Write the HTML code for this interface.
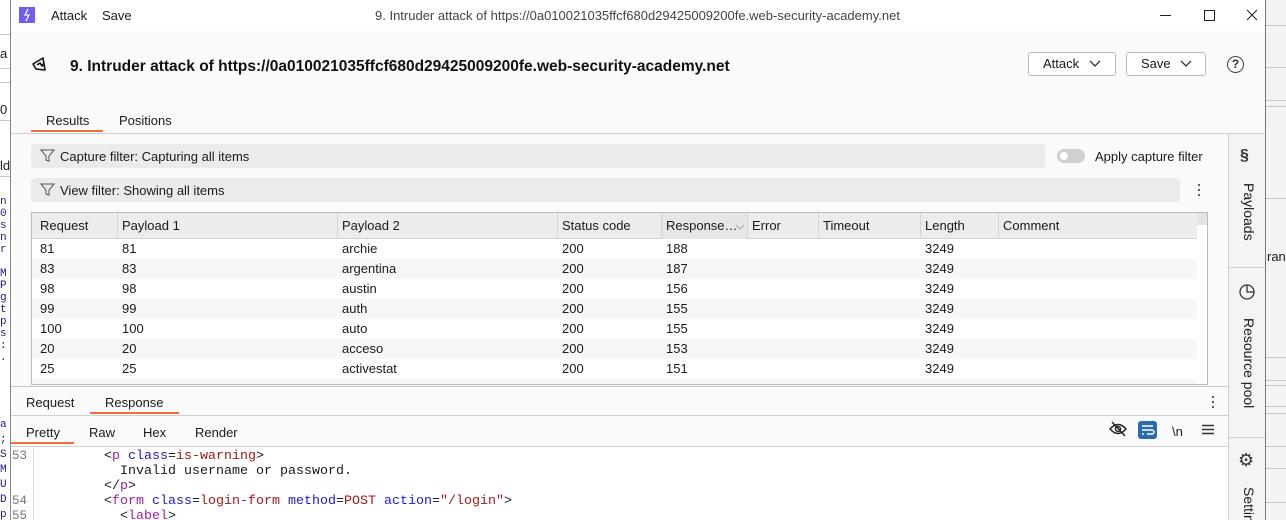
<!DOCTYPE html>
<html><head><meta charset="utf-8"><style>
*{margin:0;padding:0;box-sizing:border-box}
html,body{width:1286px;height:520px;overflow:hidden}
body{position:relative;font-family:"Liberation Sans",sans-serif;font-size:13px;color:#1a1a1a;background:#fafafa}
.a{position:absolute;white-space:nowrap}
.mono{font-family:"Liberation Mono",monospace;font-size:13.33px}
.bgL{left:0;top:0;width:11px;height:520px;background:#fff;overflow:hidden;border-right:1px solid #888}
.bgR{left:1265px;top:0;width:21px;height:520px;background:#f3f3f3;border-left:1px solid #777;overflow:hidden}
.hl{position:absolute;left:0;right:0;height:1px;background:#c8c8c8}
.row{position:absolute;left:21px;width:1165px;height:20px;line-height:20px}
.row span{position:absolute}
.hdr span{position:absolute;top:0;height:26px;line-height:26px;border-right:1px solid #d4d4d4;padding-left:4px}
.kw{color:#1a1ad0}.tg{color:#a020a0}.vl{color:#a01818}
</style></head><body>
<div class="a bgL">
<div class="a mono" style="left:0;top:196px;line-height:12px;font-size:11px;color:#1a1a80">n<br>0<br>s<br>n<br>r<br> <br>M<br>P<br>g<br>t<br>p<br>s<br>:<br>.</div>
<div class="a mono" style="left:0;top:418px;line-height:15px;font-size:11px;color:#1a1a80">a<br>;<br>S<br>M<br>U<br>D<br>p</div>
<div class="a" style="left:0;top:158px">ld</div><div class="a" style="left:0;top:102px">0</div><div class="a" style="left:0;top:46px">a</div>
<div class="hl" style="top:34px"></div><div class="hl" style="top:68px"></div><div class="hl" style="top:82px"></div><div class="hl" style="top:120px"></div><div class="hl" style="top:176px"></div>
</div>
<div class="a bgR">
<div class="hl" style="top:25px"></div><div class="hl" style="top:67px"></div><div class="hl" style="top:100px"></div><div class="hl" style="top:106px"></div><div class="hl" style="top:198px"></div><div class="hl" style="top:357px"></div><div class="hl" style="top:380px"></div><div class="hl" style="top:385px"></div><div class="hl" style="top:406px"></div><div class="hl" style="top:413px"></div><div class="hl" style="top:446px"></div><div class="hl" style="top:468px"></div><div class="hl" style="top:502px"></div>
<div class="a" style="left:1px;top:249px">rang</div>
</div>
<div class="a" style="left:11px;top:0;width:1254px;height:520px;background:#fafafa;overflow:hidden">
 <div class="a" style="left:0;top:0;width:1254px;height:31px;background:#fff"></div>
 <div class="a" style="left:8px;top:7px;width:16px;height:16px;background:#6b5ef0"><svg width="16" height="16"><path d="M9 2L6 8h4l-3 6" fill="none" stroke="#fff" stroke-width="1.3"/></svg></div>
 <div class="a" style="left:40px;top:8px">Attack</div>
 <div class="a" style="left:91px;top:8px">Save</div>
 <div class="a" style="left:364px;top:8px;color:#444">9. Intruder attack of https://0a010021035ffcf680d29425009200fe.web-security-academy.net</div>
 <svg class="a" style="left:1136px;top:8px" width="110" height="16"><path d="M13 7.5h11" stroke="#222"/><path d="M57.5 2.5h10v10h-10z" fill="none" stroke="#222"/><path d="M100 2l10 10M110 2l-10 10" stroke="#222"/></svg>
 <svg class="a" style="left:20px;top:56px" width="20" height="18"><path d="M2 8L12 2l2 12-9-1z M6 9l3-2 2 3 2-3" fill="none" stroke="#111" stroke-width="1.6" stroke-linejoin="round"/></svg>
 <div class="a" style="left:59px;top:58px;font-size:15.5px;font-weight:bold;color:#111">9. Intruder attack of https://0a010021035ffcf680d29425009200fe.web-security-academy.net</div>
 <div class="a" style="left:1017px;top:52px;width:88px;height:24px;border:1px solid #bbb;border-radius:3px;background:#fff;line-height:22px;padding-left:14px">Attack <svg width="12" height="8" style="margin-left:6px"><path d="M1 1l5 5 5-5" fill="none" stroke="#333" stroke-width="1.3"/></svg></div>
 <div class="a" style="left:1115px;top:52px;width:80px;height:24px;border:1px solid #bbb;border-radius:3px;background:#fff;line-height:22px;padding-left:14px">Save <svg width="12" height="8" style="margin-left:6px"><path d="M1 1l5 5 5-5" fill="none" stroke="#333" stroke-width="1.3"/></svg></div>
 <div class="a" style="left:1216px;top:56px;width:17px;height:17px;border:1.5px solid #444;border-radius:50%;font-size:12px;line-height:14px;text-align:center;color:#333;font-weight:bold">?</div>
 <div class="a" style="left:35px;top:113px">Results</div>
 <div class="a" style="left:108px;top:113px">Positions</div>
 <div class="a" style="left:20px;top:130px;width:72px;height:2px;background:#f26b3a"></div>
 <div class="a" style="left:0;top:133px;width:1254px;height:1px;background:#d0d0d0"></div>
 <div class="a" style="left:1217px;top:134px;width:37px;height:386px;background:#f4f4f4;border-left:1px solid #d0d0d0;overflow:hidden">
  <div class="a" style="left:11px;top:13px;font-size:16px;color:#333;font-weight:bold">§</div>
  <div class="a" style="left:28px;top:49px;transform:rotate(90deg);transform-origin:0 0;font-size:14px">Payloads</div>
  <div class="hl" style="top:133px;background:#d0d0d0"></div>
  <svg class="a" style="left:9px;top:149px" width="18" height="18"><circle cx="9" cy="9" r="7" fill="none" stroke="#333" stroke-width="1.3"/><path d="M9 2v7h7" fill="none" stroke="#333" stroke-width="1.3"/></svg>
  <div class="a" style="left:28px;top:184px;transform:rotate(90deg);transform-origin:0 0;font-size:14px">Resource pool</div>
  <div class="hl" style="top:303px;background:#d0d0d0"></div>
  <div class="a" style="left:9px;top:316px;font-size:18px;color:#333">⚙</div>
  <div class="a" style="left:28px;top:353px;transform:rotate(90deg);transform-origin:0 0;font-size:14px">Settings</div>
 </div>
 <div class="a" style="left:20px;top:144px;width:1014px;height:24px;background:#ebebeb;border-radius:4px"></div>
 <svg class="a" style="left:29px;top:148px" width="15" height="15"><path d="M1 2h13l-5 6v5l-3-1V8z" fill="none" stroke="#555"/></svg>
 <div class="a" style="left:49px;top:149px">Capture filter: Capturing all items</div>
 <div class="a" style="left:1046px;top:149px;width:28px;height:14px;border-radius:7px;background:#d0d0d0"><div class="a" style="left:3px;top:3px;width:8px;height:8px;border-radius:50%;background:#fff"></div></div>
 <div class="a" style="left:1084px;top:149px">Apply capture filter</div>
 <div class="a" style="left:20px;top:178px;width:1149px;height:24px;background:#ebebeb;border-radius:4px"></div>
 <svg class="a" style="left:29px;top:182px" width="15" height="15"><path d="M1 2h13l-5 6v5l-3-1V8z" fill="none" stroke="#555"/></svg>
 <div class="a" style="left:49px;top:183px">View filter: Showing all items</div>
 <div class="a" style="left:1185px;top:182px;width:3px;line-height:5px;font-size:18px;color:#444">·<br>·<br>·</div>
 <div class="a" style="left:20px;top:212px;width:1177px;height:173px;border:1px solid #bbb;background:#fff"></div>
 <div class="a" style="left:1186px;top:213px;width:10px;height:12px;background:#e4e4e4"></div>
 <div class="a hdr" style="left:21px;top:213px;width:1165px;height:26px;background:#ececec;border-bottom:1px solid #d0d0d0">
  <span style="left:0;width:86px;padding-left:8px">Request</span><span style="left:86px;width:220px">Payload 1</span><span style="left:306px;width:220px">Payload 2</span><span style="left:526px;width:104px">Status code</span><span style="left:630px;width:86px;background:#e6e6e6">Response…<svg width="10" height="6" style="position:absolute;right:2px;top:11px"><path d="M1 1l4 4 4-4" fill="none" stroke="#aaa"/></svg></span><span style="left:716px;width:71px">Error</span><span style="left:787px;width:102px">Timeout</span><span style="left:889px;width:78px">Length</span><span style="left:967px;width:198px;border:none">Comment</span>
 </div>
 <div class="row" style="top:239px"><span style="left:8px">81</span><span style="left:90px">81</span><span style="left:310px">archie</span><span style="left:530px">200</span><span style="left:634px">188</span><span style="left:893px">3249</span></div>
 <div class="row" style="top:259px;background:#f7f7f7"><span style="left:8px">83</span><span style="left:90px">83</span><span style="left:310px">argentina</span><span style="left:530px">200</span><span style="left:634px">187</span><span style="left:893px">3249</span></div>
 <div class="row" style="top:279px"><span style="left:8px">98</span><span style="left:90px">98</span><span style="left:310px">austin</span><span style="left:530px">200</span><span style="left:634px">156</span><span style="left:893px">3249</span></div>
 <div class="row" style="top:299px;background:#f7f7f7"><span style="left:8px">99</span><span style="left:90px">99</span><span style="left:310px">auth</span><span style="left:530px">200</span><span style="left:634px">155</span><span style="left:893px">3249</span></div>
 <div class="row" style="top:319px"><span style="left:8px">100</span><span style="left:90px">100</span><span style="left:310px">auto</span><span style="left:530px">200</span><span style="left:634px">155</span><span style="left:893px">3249</span></div>
 <div class="row" style="top:339px;background:#f7f7f7"><span style="left:8px">20</span><span style="left:90px">20</span><span style="left:310px">acceso</span><span style="left:530px">200</span><span style="left:634px">153</span><span style="left:893px">3249</span></div>
 <div class="row" style="top:359px"><span style="left:8px">25</span><span style="left:90px">25</span><span style="left:310px">activestat</span><span style="left:530px">200</span><span style="left:634px">151</span><span style="left:893px">3249</span></div>
 <div class="row" style="top:379px;height:5px;background:#f7f7f7"></div>
 <div class="a" style="left:0;top:386px;width:1217px;height:1px;background:#c8c8c8"></div>
 <div class="a" style="left:15px;top:395px">Request</div>
 <div class="a" style="left:94px;top:395px">Response</div>
 <div class="a" style="left:79px;top:412px;width:89px;height:2px;background:#f26b3a"></div>
 <div class="a" style="left:1199px;top:394px;width:3px;line-height:5px;font-size:18px;color:#444">·<br>·<br>·</div>
 <div class="a" style="left:0;top:415px;width:1217px;height:1px;background:#d0d0d0"></div>
 <div class="a" style="left:15px;top:425px">Pretty</div>
 <div class="a" style="left:78px;top:425px">Raw</div>
 <div class="a" style="left:132px;top:425px">Hex</div>
 <div class="a" style="left:184px;top:425px">Render</div>
 <div class="a" style="left:0;top:442px;width:63px;height:2px;background:#f26b3a"></div>
 <svg class="a" style="left:1098px;top:421px" width="18" height="16"><path d="M1 8q8-9 16 0q-8 9-16 0z" fill="none" stroke="#222" stroke-width="1.4"/><circle cx="9" cy="8" r="2.5" fill="none" stroke="#222" stroke-width="1.4"/><path d="M3 1l13 14" stroke="#222" stroke-width="1.4"/></svg>
 <div class="a" style="left:1127px;top:421px;width:19px;height:18px;background:#2d6bb0;border-radius:3px"><svg width="19" height="18"><path d="M4 5h11M4 9h10a2 2 0 010 4H9M4 13h2" fill="none" stroke="#fff" stroke-width="1.4"/></svg></div>
 <div class="a" style="left:1161px;top:424px;font-size:13px">\n</div>
 <svg class="a" style="left:1191px;top:424px" width="12" height="11"><path d="M0 1.5h12M0 5.5h12M0 9.5h12" stroke="#333" stroke-width="1.4"/></svg>
 <div class="a" style="left:0;top:446px;width:1217px;height:74px;background:#fff;border-top:1px solid #d0d0d0"></div>
 <div class="a" style="left:22px;top:447px;width:1px;height:73px;background:#ddd"></div>
 <div class="a mono" style="left:1px;top:449px;line-height:15px;color:#777;font-size:12.5px">53<br><br><br>54<br>55</div>
 <div class="a mono" style="left:93px;top:449px;line-height:15px">&lt;<span class="tg">p</span> <span class="kw">class</span>=<span class="vl">is-warning</span>&gt;<br>&nbsp;&nbsp;Invalid username or password.<br>&lt;/<span class="tg">p</span>&gt;<br>&lt;<span class="tg">form</span> <span class="kw">class</span>=<span class="vl">login-form</span> <span class="kw">method</span>=<span class="vl">POST</span> <span class="kw">action</span>=<span class="vl">"/login"</span>&gt;<br>&nbsp;&nbsp;&lt;<span class="tg">label</span>&gt;</div>
</div>
</body></html>
